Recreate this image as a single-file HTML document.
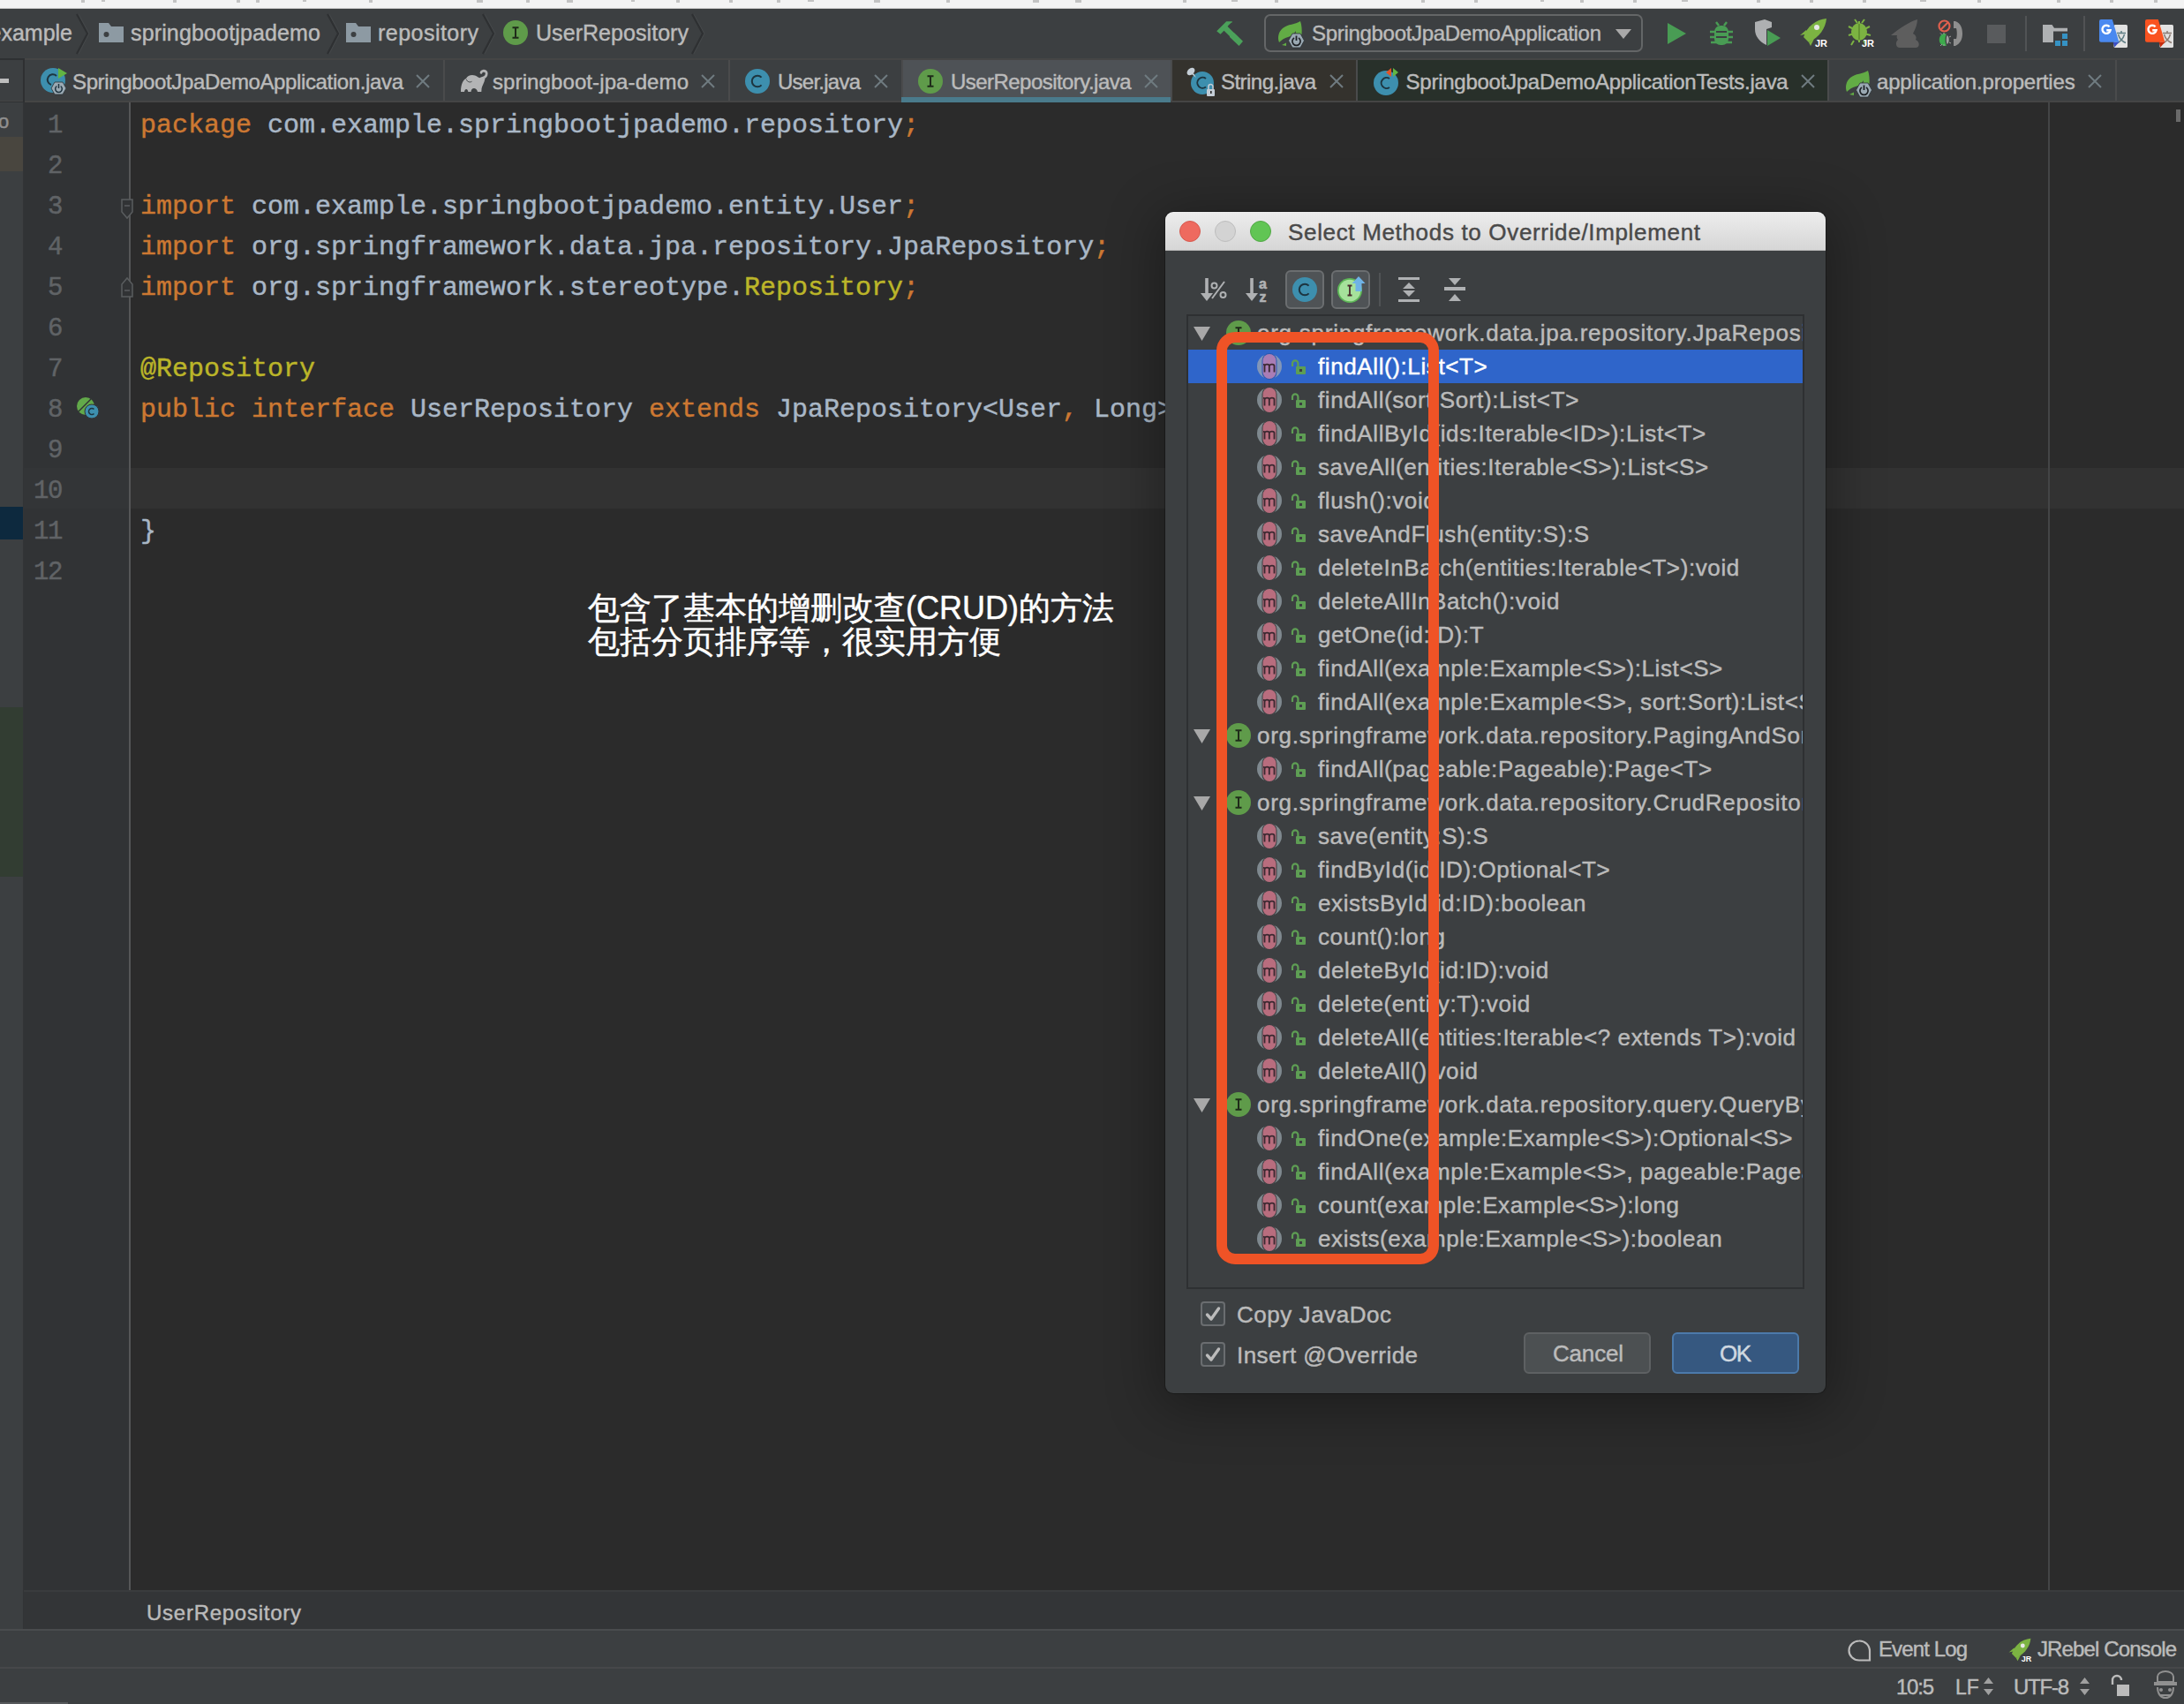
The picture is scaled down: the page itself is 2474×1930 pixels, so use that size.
<!DOCTYPE html><html><head><meta charset="utf-8"><style>
*{margin:0;padding:0;box-sizing:border-box}
html,body{width:2474px;height:1930px;overflow:hidden;background:#2B2B2B;font-family:"Liberation Sans",sans-serif}
.a{position:absolute}
.t{position:absolute;white-space:nowrap;line-height:1;-webkit-text-stroke:0.45px currentColor}
svg{position:absolute;overflow:visible}
</style></head><body>
<div class="a" style="left:0;top:0;width:2474px;height:10px;background:#F3F3F3"></div>
<div class="a" style="left:92px;top:0;width:4px;height:3px;background:#9A9A9A;opacity:0.55"></div>
<div class="a" style="left:115px;top:0;width:4px;height:2px;background:#9A9A9A;opacity:0.55"></div>
<div class="a" style="left:196px;top:0;width:4px;height:3px;background:#9A9A9A;opacity:0.55"></div>
<div class="a" style="left:268px;top:0;width:4px;height:3px;background:#9A9A9A;opacity:0.55"></div>
<div class="a" style="left:290px;top:0;width:4px;height:3px;background:#9A9A9A;opacity:0.55"></div>
<div class="a" style="left:343px;top:0;width:4px;height:2px;background:#9A9A9A;opacity:0.55"></div>
<div class="a" style="left:418px;top:0;width:4px;height:3px;background:#9A9A9A;opacity:0.55"></div>
<div class="a" style="left:540px;top:0;width:7px;height:3px;background:#9A9A9A;opacity:0.55"></div>
<div class="a" style="left:596px;top:0;width:4px;height:3px;background:#9A9A9A;opacity:0.55"></div>
<div class="a" style="left:642px;top:0;width:7px;height:3px;background:#9A9A9A;opacity:0.55"></div>
<div class="a" style="left:715px;top:0;width:4px;height:2px;background:#9A9A9A;opacity:0.55"></div>
<div class="a" style="left:766px;top:0;width:4px;height:3px;background:#9A9A9A;opacity:0.55"></div>
<div class="a" style="left:826px;top:0;width:4px;height:3px;background:#9A9A9A;opacity:0.55"></div>
<div class="a" style="left:880px;top:0;width:4px;height:3px;background:#9A9A9A;opacity:0.55"></div>
<div class="a" style="left:915px;top:0;width:7px;height:2px;background:#9A9A9A;opacity:0.55"></div>
<div class="a" style="left:990px;top:0;width:7px;height:3px;background:#9A9A9A;opacity:0.55"></div>
<div class="a" style="left:1072px;top:0;width:4px;height:3px;background:#9A9A9A;opacity:0.55"></div>
<div class="a" style="left:1170px;top:0;width:7px;height:3px;background:#9A9A9A;opacity:0.55"></div>
<div class="a" style="left:1218px;top:0;width:7px;height:3px;background:#9A9A9A;opacity:0.55"></div>
<div class="a" style="left:1340px;top:0;width:4px;height:3px;background:#9A9A9A;opacity:0.55"></div>
<div class="a" style="left:1395px;top:0;width:7px;height:2px;background:#9A9A9A;opacity:0.55"></div>
<div class="a" style="left:1444px;top:0;width:4px;height:3px;background:#9A9A9A;opacity:0.55"></div>
<div class="a" style="left:1610px;top:0;width:4px;height:3px;background:#9A9A9A;opacity:0.55"></div>
<div class="a" style="left:1670px;top:0;width:4px;height:3px;background:#9A9A9A;opacity:0.55"></div>
<div class="a" style="left:1745px;top:0;width:4px;height:2px;background:#9A9A9A;opacity:0.55"></div>
<div class="a" style="left:1790px;top:0;width:4px;height:3px;background:#9A9A9A;opacity:0.55"></div>
<div class="a" style="left:1850px;top:0;width:4px;height:3px;background:#9A9A9A;opacity:0.55"></div>
<div class="a" style="left:1905px;top:0;width:7px;height:2px;background:#9A9A9A;opacity:0.55"></div>
<div class="a" style="left:1990px;top:0;width:4px;height:3px;background:#9A9A9A;opacity:0.55"></div>
<div class="a" style="left:2050px;top:0;width:4px;height:3px;background:#9A9A9A;opacity:0.55"></div>
<div class="a" style="left:2110px;top:0;width:4px;height:3px;background:#9A9A9A;opacity:0.55"></div>
<div class="a" style="left:2175px;top:0;width:7px;height:2px;background:#9A9A9A;opacity:0.55"></div>
<div class="a" style="left:2240px;top:0;width:4px;height:3px;background:#9A9A9A;opacity:0.55"></div>
<div class="a" style="left:2330px;top:0;width:4px;height:3px;background:#9A9A9A;opacity:0.55"></div>
<div class="a" style="left:2390px;top:0;width:4px;height:3px;background:#9A9A9A;opacity:0.55"></div>
<div class="a" style="left:2440px;top:0;width:4px;height:3px;background:#9A9A9A;opacity:0.55"></div>
<div class="a" style="left:0;top:9px;width:2474px;height:1px;background:#C8C8C8"></div>
<div class="a" style="left:0;top:10px;width:2474px;height:57px;background:#3C3F41"></div>
<div class="a" style="left:0;top:66px;width:2474px;height:2px;background:#454545"></div>
<div class="t" style="left:-12.50px;top:24.84px;font-size:25px;color:#BBBBBB;letter-spacing:0.001px;">example</div>
<svg style="left:86px;top:16px" width="16" height="46" viewBox="0 0 16 46"><path d="M1 0 L13 22 L1 45" fill="none" stroke="#2E3032" stroke-width="2.2"/><path d="M3 0 L15 22 L3 45" fill="none" stroke="#45484A" stroke-width="1"/></svg>
<svg style="left:112px;top:26px" width="28" height="22" viewBox="0 0 28 22"><path d="M0 0 H11 L14 4 H28 V22 H0 Z" fill="#8D9AA3"/><circle cx="8.5" cy="13" r="3" fill="#3C3F41"/></svg>
<div class="t" style="left:148.00px;top:24.84px;font-size:25px;color:#BBBBBB;letter-spacing:0.147px;">springbootjpademo</div>
<svg style="left:370px;top:16px" width="16" height="46" viewBox="0 0 16 46"><path d="M1 0 L13 22 L1 45" fill="none" stroke="#2E3032" stroke-width="2.2"/><path d="M3 0 L15 22 L3 45" fill="none" stroke="#45484A" stroke-width="1"/></svg>
<svg style="left:392px;top:26px" width="28" height="22" viewBox="0 0 28 22"><path d="M0 0 H11 L14 4 H28 V22 H0 Z" fill="#8D9AA3"/><circle cx="8.5" cy="13" r="3" fill="#3C3F41"/></svg>
<div class="t" style="left:428.00px;top:24.84px;font-size:25px;color:#BBBBBB;letter-spacing:0.470px;">repository</div>
<svg style="left:546px;top:16px" width="16" height="46" viewBox="0 0 16 46"><path d="M1 0 L13 22 L1 45" fill="none" stroke="#2E3032" stroke-width="2.2"/><path d="M3 0 L15 22 L3 45" fill="none" stroke="#45484A" stroke-width="1"/></svg>
<svg style="left:570px;top:23px" width="28" height="28" viewBox="0 0 28 28"><circle cx="14" cy="14" r="14" fill="#5F9B4A"/><path d="M10.5 8.2 H17.5 M14 8.2 V19.8 M10.5 19.8 H17.5" stroke="#1F2B1A" stroke-width="2" fill="none"/></svg>
<div class="t" style="left:607.00px;top:24.84px;font-size:25px;color:#BBBBBB;letter-spacing:0.056px;">UserRepository</div>
<svg style="left:783px;top:16px" width="16" height="46" viewBox="0 0 16 46"><path d="M1 0 L13 22 L1 45" fill="none" stroke="#2E3032" stroke-width="2.2"/><path d="M3 0 L15 22 L3 45" fill="none" stroke="#45484A" stroke-width="1"/></svg>
<svg style="left:1370px;top:14px" width="40" height="40" viewBox="0 0 40 40"><path d="M8.2 21.2 L19.2 10.2 H25.8 V11.2 C24 12 22 14 20.6 16 L27.2 22.5 L28.5 23.5 L38 32.8 L33.5 38 L23 28 V27 L16.5 20.8 L12.5 24.8 Z" fill="#4BA15A"/></svg>
<div class="a" style="left:1432px;top:16px;width:429px;height:43px;border:2px solid #646667;border-radius:7px"></div>
<svg style="left:1446px;top:22px" width="32" height="32" viewBox="0 0 32 32"><path d="M27 2 C21 6 13 5 7 10 C2 14 1 21 3 26 C6 23 9 21 13 20 C17 19 20 16 22 13 C22 16 21 18 19 20 L28.5 17 C29 12 28.5 6 27 2 Z" fill="#62AC45"/><path d="M6 29 L11 26.5 V30 Z" fill="#62AC45"/><path d="M13.5 24 L18 16 H27 L31.5 24 L27 32 H18 Z" fill="#9AA9B3" stroke="#2B3236" stroke-width="0.8"/><path d="M20 21 A4.6 4.6 0 1 0 25 21" stroke="#1E2226" stroke-width="1.7" fill="none"/><path d="M22.5 18.5 V24" stroke="#1E2226" stroke-width="1.8"/></svg>
<div class="t" style="left:1486.00px;top:25.68px;font-size:24px;color:#BBBBBB;letter-spacing:-0.304px;">SpringbootJpaDemoApplication</div>
<svg style="left:1830px;top:33px" width="18" height="11" viewBox="0 0 18 11"><path d="M0 0 H18 L9 11 Z" fill="#A9A9A9"/></svg>
<svg style="left:1889px;top:26px" width="21" height="24" viewBox="0 0 21 24"><path d="M0 0 L21 12 L0 24 Z" fill="#499C54"/></svg>
<svg style="left:1937px;top:23px" width="26" height="30" viewBox="0 0 26 30"><path d="M7 2 L10 6 M19 2 L16 6" stroke="#499C54" stroke-width="2.4"/><rect x="5" y="6" width="16" height="22" rx="7" fill="#499C54"/><path d="M0 13 H26 M0 19 H26 M1 25 H25" stroke="#499C54" stroke-width="2.6"/><path d="M7 13 H19 M7 19 H19" stroke="#3C3F41" stroke-width="2.2"/></svg>
<svg style="left:1987px;top:21px" width="32" height="32" viewBox="0 0 32 32"><path d="M1 4 L12 1 L20 4 V10 L14 12 V30 C6 26 1 20 1 12 Z" fill="#AEB0B2"/><path d="M15 13 L30 22 L15 31 Z" fill="#499C54"/></svg>
<svg style="left:2037px;top:20px" width="34" height="34" viewBox="0 0 34 34"><path d="M6 22 C10 10 20 2 32 1 C31 12 24 22 12 28 Z" fill="#7CB342"/><path d="M2 20 L9 14 L12 18 Z M12 28 L18 24 L14 32 Z" fill="#7CB342"/><circle cx="21" cy="11" r="3" fill="#E8E8E8"/><text x="19" y="33" font-family="Liberation Sans" font-weight="bold" font-size="11" fill="#FFFFFF">JR</text></svg>
<svg style="left:2090px;top:20px" width="34" height="34" viewBox="0 0 34 34"><ellipse cx="16" cy="16" rx="9" ry="10" fill="#7CB342"/><path d="M16 4 V28 M4 10 L10 13 M4 20 L10 18 M28 10 L22 13 M29 20 L22 18 M10 26 L7 31 M21 26 L24 31 M11 2 L14 6 M22 2 L19 6" stroke="#7CB342" stroke-width="2"/><path d="M16 7 V25" stroke="#5C8A2E" stroke-width="1.5"/><text x="19" y="33" font-family="Liberation Sans" font-weight="bold" font-size="11" fill="#FFFFFF">JR</text></svg>
<svg style="left:2142px;top:22px" width="34" height="34" viewBox="0 0 34 34"><path d="M30 0 C22 2 10 10 0 18 L7 18 C6 20 7 22 8 23 C5 25 5 32 10 32 H28 C33 32 33 25 28 23 C30 20 27 17 25 16 C28 10 30 5 30 0 Z" fill="#5E5E5E"/></svg>
<svg style="left:2195px;top:22px" width="30" height="31" viewBox="0 0 30 31"><circle cx="7.5" cy="7.5" r="6" fill="none" stroke="#E0604E" stroke-width="2.2"/><path d="M3.5 11.5 L11.5 3.5" stroke="#E0604E" stroke-width="2.2"/><path d="M10 16.5 A6 7 0 1 0 10 29.5 C8 27 8 19 10 16.5 Z" fill="#3DAA4C"/><path d="M10.5 18 C13.5 19 13.5 27 10.5 28 C9.5 25 9.5 21 10.5 18 Z" fill="#A0A0A0"/><path d="M3 15.5 L5 17.5 M7 15 L7 17 M3 30 L5 28 M7 30 V28 M13 20 L15 19 M13 26 L15 27" stroke="#A0A0A0" stroke-width="1"/><path d="M18 2 H20 C26 4 28 10 28 16 C28 22 26 27 20 30 H18 V22 H21 C22 19 22 13 21 10 H18 Z" fill="#8E8E8E"/></svg>
<div class="a" style="left:2251px;top:28px;width:21px;height:21px;background:#595B5D"></div>
<div class="a" style="left:2294px;top:18px;width:2px;height:40px;background:#515355"></div>
<svg style="left:2314px;top:28px" width="30" height="26" viewBox="0 0 30 26"><path d="M0 0 H10.5 L13 3.8 H28 V7.6 H12 V20 H0 Z" fill="#AFB1B3"/><rect x="22" y="10" width="6" height="6" fill="#3592C4"/><rect x="14" y="18" width="6" height="6" fill="#3592C4"/><rect x="22" y="18" width="6" height="6" fill="#3592C4"/></svg>
<div class="a" style="left:2360px;top:18px;width:2px;height:40px;background:#515355"></div>
<svg style="left:2377px;top:21px" width="34" height="34" viewBox="0 0 34 34"><rect x="17.5" y="7" width="15.5" height="26" rx="1.5" fill="#E2E2E2"/><path d="M21 16.5 H31 M26 14 V16.5 M22.5 18 C24 23 27 26 31 27.5 M29.5 18 C28 23 25 26 21 28" stroke="#5E7D84" stroke-width="1.5" fill="none"/><path d="M3 1 H15.8 L23.4 26.7 H3 A2 2 0 0 1 1 24.7 V3 A2 2 0 0 1 3 1 Z" fill="#4A89F0"/><path d="M16.6 26.7 H23.4 L18.3 32.6 Z" fill="#3A4FC4"/><path d="M12.6 9.3 A4.6 4.6 0 1 0 13.6 13.2 H9.2" stroke="#FFFFFF" stroke-width="2.4" fill="none"/></svg>
<svg style="left:2429px;top:21px" width="34" height="34" viewBox="0 0 34 34"><rect x="17.5" y="7" width="15.5" height="26" rx="1.5" fill="#E2E2E2"/><path d="M21 16.5 H31 M26 14 V16.5 M22.5 18 C24 23 27 26 31 27.5 M29.5 18 C28 23 25 26 21 28" stroke="#8A7A72" stroke-width="1.5" fill="none"/><path d="M3 1 H15.8 L23.4 26.7 H3 A2 2 0 0 1 1 24.7 V3 A2 2 0 0 1 3 1 Z" fill="#FA5320"/><path d="M16.6 26.7 H23.4 L18.3 32.6 Z" fill="#C42A0C"/><path d="M12.6 9.3 A4.6 4.6 0 1 0 13.6 13.2 H9.2" stroke="#FFFFFF" stroke-width="2.4" fill="none"/></svg>
<div class="a" style="left:0;top:68px;width:2474px;height:48px;background:#3C3F41"></div>
<div class="a" style="left:0;top:114px;width:2474px;height:2px;background:#454545"></div>
<div class="a" style="left:0;top:89px;width:10px;height:5px;background:#BDBDBD"></div>
<div class="a" style="left:0;top:66px;width:28px;height:2px;background:#2E3032"></div>
<div class="a" style="left:0;top:115px;width:28px;height:3px;background:#2E3032"></div>
<div class="a" style="left:26px;top:66px;width:2px;height:52px;background:#2E3032"></div>
<div class="a" style="left:1021px;top:68px;width:305px;height:46px;background:#4E5256"></div>
<div class="a" style="left:1326px;top:68px;width:210px;height:46px;background:#34322D"></div>
<div class="a" style="left:1536px;top:68px;width:534px;height:46px;background:#28302A"></div>
<div class="a" style="left:502px;top:68px;width:2px;height:46px;background:#4A4B4C"></div>
<div class="t" style="left:82.00px;top:80.68px;font-size:24px;color:#BBBBBB;letter-spacing:-0.372px;">SpringbootJpaDemoApplication.java</div>
<svg style="left:471px;top:84px" width="16" height="16" viewBox="0 0 16 16"><path d="M1 1 L15 15 M15 1 L1 15" stroke="#6F7B80" stroke-width="2"/></svg>
<div class="a" style="left:825px;top:68px;width:2px;height:46px;background:#4A4B4C"></div>
<div class="t" style="left:558.00px;top:80.68px;font-size:24px;color:#BBBBBB;letter-spacing:0.104px;">springboot-jpa-demo</div>
<svg style="left:794px;top:84px" width="16" height="16" viewBox="0 0 16 16"><path d="M1 1 L15 15 M15 1 L1 15" stroke="#6F7B80" stroke-width="2"/></svg>
<div class="a" style="left:1021px;top:68px;width:2px;height:46px;background:#4A4B4C"></div>
<div class="t" style="left:881.00px;top:80.68px;font-size:24px;color:#BBBBBB;letter-spacing:-0.755px;">User.java</div>
<svg style="left:990px;top:84px" width="16" height="16" viewBox="0 0 16 16"><path d="M1 1 L15 15 M15 1 L1 15" stroke="#6F7B80" stroke-width="2"/></svg>
<div class="a" style="left:1326px;top:68px;width:2px;height:46px;background:#4A4B4C"></div>
<div class="t" style="left:1077.00px;top:80.68px;font-size:24px;color:#BBBBBB;letter-spacing:-0.544px;">UserRepository.java</div>
<svg style="left:1296px;top:84px" width="16" height="16" viewBox="0 0 16 16"><path d="M1 1 L15 15 M15 1 L1 15" stroke="#6F7B80" stroke-width="2"/></svg>
<div class="a" style="left:1536px;top:68px;width:2px;height:46px;background:#4A4B4C"></div>
<div class="t" style="left:1383.00px;top:80.68px;font-size:24px;color:#BBBBBB;letter-spacing:-0.539px;">String.java</div>
<svg style="left:1506px;top:84px" width="16" height="16" viewBox="0 0 16 16"><path d="M1 1 L15 15 M15 1 L1 15" stroke="#6F7B80" stroke-width="2"/></svg>
<div class="a" style="left:2070px;top:68px;width:2px;height:46px;background:#4A4B4C"></div>
<div class="t" style="left:1592.60px;top:80.68px;font-size:24px;color:#BBBBBB;letter-spacing:-0.265px;">SpringbootJpaDemoApplicationTests.java</div>
<svg style="left:2040px;top:84px" width="16" height="16" viewBox="0 0 16 16"><path d="M1 1 L15 15 M15 1 L1 15" stroke="#6F7B80" stroke-width="2"/></svg>
<div class="a" style="left:2396px;top:68px;width:2px;height:46px;background:#4A4B4C"></div>
<div class="t" style="left:2126.00px;top:80.68px;font-size:24px;color:#BBBBBB;letter-spacing:-0.164px;">application.properties</div>
<svg style="left:2365px;top:84px" width="16" height="16" viewBox="0 0 16 16"><path d="M1 1 L15 15 M15 1 L1 15" stroke="#6F7B80" stroke-width="2"/></svg>
<div class="a" style="left:1021px;top:110px;width:305px;height:6px;background:#4A7B8C"></div>
<svg style="left:46px;top:75px" width="34" height="34" viewBox="0 0 34 34"><circle cx="14" cy="16" r="14" fill="#3D8FAE"/><path d="M18 11 A6 6 0 1 0 12 21" stroke="#1D3540" stroke-width="2" fill="none"/><path d="M20 2 L30 8 L20 14 Z" fill="#62B543"/><path d="M12 25 L16 18 H25 L29 25 L25 32 H16 Z" fill="#9AA9B3" stroke="#2B3236" stroke-width="0.8"/><path d="M18.3 22.5 A3.8 3.8 0 1 0 22.7 22.5" stroke="#1F3440" stroke-width="1.5" fill="none"/><path d="M20.5 20 V25" stroke="#1F3440" stroke-width="1.5"/></svg>
<svg style="left:520px;top:78px" width="34" height="28" viewBox="10 12 34 28"><path d="M12 38 C12 29 15 24 18 23 C19 20.5 22 19 25 19 C29.5 19 32 22.5 35 22.5 L39.5 23 C38.5 28 36.2 31 35.6 34 L35.3 38 H31 C30.5 35.5 28.5 34 27 34 C25 34 23.8 35.5 23.5 38 H20.3 C20 36 19.2 35 18.2 35 C17.2 35 16.3 36 16 38 Z" fill="#B3B4B5"/><path d="M35 22.8 C39.5 22 41.2 19.5 41.2 17.2 C41.2 14.8 39 14 37.2 14.3 C36 14.5 35.2 15.2 35 16.3" stroke="#B3B4B5" stroke-width="2.8" fill="none" stroke-linecap="round"/><path d="M18.3 23.8 C19.3 27 22.5 27.6 24.5 26.3" stroke="#3C3F41" stroke-width="0.9" fill="none"/></svg>
<svg style="left:843.5px;top:78px" width="28" height="28" viewBox="0 0 28 28"><circle cx="14" cy="14" r="14" fill="#3D8FAE"/><path d="M18.6 9.6 A6.3 6.3 0 1 0 18.6 18.4" stroke="#1D3540" stroke-width="2" fill="none"/></svg>
<svg style="left:1040px;top:78px" width="28" height="28" viewBox="0 0 28 28"><circle cx="14" cy="14" r="14" fill="#5F9B4A"/><path d="M10.5 8.2 H17.5 M14 8.2 V19.8 M10.5 19.8 H17.5" stroke="#1F2B1A" stroke-width="2" fill="none"/></svg>
<svg style="left:1343px;top:75px" width="34" height="34" viewBox="0 0 34 34"><circle cx="19" cy="19" r="13" fill="#3D8FAE"/><path d="M23 14 A6 6 0 1 0 23 23.5" stroke="#1D3540" stroke-width="2" fill="none"/><ellipse cx="6" cy="6" rx="5" ry="3.5" transform="rotate(-40 6 6)" fill="#C5CED6"/><path d="M7 9 L12 13 L9 8 Z" fill="#C5CED6"/><rect x="24" y="26" width="9" height="8" rx="1" fill="#C5CED6"/><path d="M26 26 V23 A2.5 2.5 0 0 1 31 23 V26" stroke="#C5CED6" stroke-width="1.6" fill="none"/><rect x="28" y="28" width="1.6" height="3" fill="#2B2B2B"/></svg>
<svg style="left:1556px;top:75px" width="32" height="34" viewBox="0 0 32 34"><circle cx="14" cy="19" r="14" fill="#3D8FAE"/><path d="M18 14 A6 6 0 1 0 18 24" stroke="#1D3540" stroke-width="2" fill="none"/><path d="M20 2 L20 12 L14 7 Z" fill="#E0542A"/><path d="M22 2 L28 7 L22 12 Z" fill="#62B543"/></svg>
<svg style="left:2089px;top:78px" width="32" height="32" viewBox="0 0 32 32"><path d="M27 2 C21 6 13 5 7 10 C2 14 1 21 3 26 C6 23 9 21 13 20 C17 19 20 16 22 13 C22 16 21 18 19 20 L28.5 17 C29 12 28.5 6 27 2 Z" fill="#62AC45"/><path d="M6 29 L11 26.5 V30 Z" fill="#62AC45"/><path d="M13.5 24 L18 16 H27 L31.5 24 L27 32 H18 Z" fill="#9AA9B3" stroke="#2B3236" stroke-width="0.8"/><path d="M20 21 A4.6 4.6 0 1 0 25 21" stroke="#1E2226" stroke-width="1.7" fill="none"/><path d="M22.5 18.5 V24" stroke="#1E2226" stroke-width="1.8"/></svg>
<div class="a" style="left:0;top:116px;width:26px;height:1730px;background:#3C3F41"></div>
<div class="a" style="left:26px;top:116px;width:1px;height:1730px;background:#323436"></div>
<div class="a" style="left:0;top:155px;width:26px;height:39px;background:#49463F"></div>
<div class="a" style="left:0;top:574px;width:26px;height:37px;background:#0D293E"></div>
<div class="a" style="left:0;top:801px;width:26px;height:192px;background:#323D32"></div>
<div class="t" style="left:-2.00px;top:127.38px;font-size:22px;color:#909090;">o</div>
<div class="a" style="left:27px;top:116px;width:120px;height:1686px;background:#313335"></div>
<div class="a" style="left:146px;top:116px;width:2px;height:1686px;background:#555657"></div>
<div class="a" style="left:148px;top:530px;width:2326px;height:46px;background:#323232"></div>
<div class="a" style="left:2320px;top:116px;width:2px;height:1686px;background:#444546"></div>
<div class="a" style="left:2465px;top:124px;width:5px;height:14px;background:#6A6A6A"></div>
<div class="a" style="left:27px;top:530px;width:119px;height:46px;background:#333537"></div>
<div class="t" style="left:54.00px;top:127.77px;font-size:29px;color:#606366;font-family:'Liberation Mono';letter-spacing:-1.4px;">1</div>
<div class="t" style="left:54.00px;top:173.77px;font-size:29px;color:#606366;font-family:'Liberation Mono';letter-spacing:-1.4px;">2</div>
<div class="t" style="left:54.00px;top:219.77px;font-size:29px;color:#606366;font-family:'Liberation Mono';letter-spacing:-1.4px;">3</div>
<div class="t" style="left:54.00px;top:265.77px;font-size:29px;color:#606366;font-family:'Liberation Mono';letter-spacing:-1.4px;">4</div>
<div class="t" style="left:54.00px;top:311.77px;font-size:29px;color:#606366;font-family:'Liberation Mono';letter-spacing:-1.4px;">5</div>
<div class="t" style="left:54.00px;top:357.77px;font-size:29px;color:#606366;font-family:'Liberation Mono';letter-spacing:-1.4px;">6</div>
<div class="t" style="left:54.00px;top:403.77px;font-size:29px;color:#606366;font-family:'Liberation Mono';letter-spacing:-1.4px;">7</div>
<div class="t" style="left:54.00px;top:449.77px;font-size:29px;color:#606366;font-family:'Liberation Mono';letter-spacing:-1.4px;">8</div>
<div class="t" style="left:54.00px;top:495.77px;font-size:29px;color:#606366;font-family:'Liberation Mono';letter-spacing:-1.4px;">9</div>
<div class="t" style="left:38.00px;top:541.77px;font-size:29px;color:#606366;font-family:'Liberation Mono';letter-spacing:-1.4px;">10</div>
<div class="t" style="left:38.00px;top:587.77px;font-size:29px;color:#606366;font-family:'Liberation Mono';letter-spacing:-1.4px;">11</div>
<div class="t" style="left:38.00px;top:633.77px;font-size:29px;color:#606366;font-family:'Liberation Mono';letter-spacing:-1.4px;">12</div>
<div class="t" style="left:159.00px;top:127.00px;font-size:30px;color:#CC7832;font-family:'Liberation Mono';">package </div>
<div class="t" style="left:303.00px;top:127.00px;font-size:30px;color:#A9B7C6;font-family:'Liberation Mono';">com.example.springbootjpademo.repository</div>
<div class="t" style="left:1023.00px;top:127.00px;font-size:30px;color:#CC7832;font-family:'Liberation Mono';">;</div>
<div class="t" style="left:159.00px;top:219.00px;font-size:30px;color:#CC7832;font-family:'Liberation Mono';">import </div>
<div class="t" style="left:285.00px;top:219.00px;font-size:30px;color:#A9B7C6;font-family:'Liberation Mono';">com.example.springbootjpademo.entity.User</div>
<div class="t" style="left:1023.00px;top:219.00px;font-size:30px;color:#CC7832;font-family:'Liberation Mono';">;</div>
<div class="t" style="left:159.00px;top:265.00px;font-size:30px;color:#CC7832;font-family:'Liberation Mono';">import </div>
<div class="t" style="left:285.00px;top:265.00px;font-size:30px;color:#A9B7C6;font-family:'Liberation Mono';">org.springframework.data.jpa.repository.JpaRepository</div>
<div class="t" style="left:1239.00px;top:265.00px;font-size:30px;color:#CC7832;font-family:'Liberation Mono';">;</div>
<div class="t" style="left:159.00px;top:311.00px;font-size:30px;color:#CC7832;font-family:'Liberation Mono';">import </div>
<div class="t" style="left:285.00px;top:311.00px;font-size:30px;color:#A9B7C6;font-family:'Liberation Mono';">org.springframework.stereotype.</div>
<div class="t" style="left:843.00px;top:311.00px;font-size:30px;color:#BBB529;font-family:'Liberation Mono';">Repository</div>
<div class="t" style="left:1023.00px;top:311.00px;font-size:30px;color:#CC7832;font-family:'Liberation Mono';">;</div>
<div class="t" style="left:159.00px;top:403.00px;font-size:30px;color:#BBB529;font-family:'Liberation Mono';">@Repository</div>
<div class="t" style="left:159.00px;top:449.00px;font-size:30px;color:#CC7832;font-family:'Liberation Mono';">public </div>
<div class="t" style="left:285.00px;top:449.00px;font-size:30px;color:#CC7832;font-family:'Liberation Mono';">interface </div>
<div class="t" style="left:465.00px;top:449.00px;font-size:30px;color:#A9B7C6;font-family:'Liberation Mono';">UserRepository </div>
<div class="t" style="left:735.00px;top:449.00px;font-size:30px;color:#CC7832;font-family:'Liberation Mono';">extends </div>
<div class="t" style="left:879.00px;top:449.00px;font-size:30px;color:#A9B7C6;font-family:'Liberation Mono';">JpaRepository&lt;User</div>
<div class="t" style="left:1203.00px;top:449.00px;font-size:30px;color:#CC7832;font-family:'Liberation Mono';">, </div>
<div class="t" style="left:1239.00px;top:449.00px;font-size:30px;color:#A9B7C6;font-family:'Liberation Mono';">Long&gt;</div>
<div class="t" style="left:159.00px;top:587.00px;font-size:30px;color:#A9B7C6;font-family:'Liberation Mono';">}</div>
<svg style="left:137px;top:225px" width="14" height="24" viewBox="0 0 14 24"><path d="M1 1 H13 V15 L7 22 L1 15 Z" fill="#313335" stroke="#5A5D5F" stroke-width="1.5"/><path d="M4 8 H10" stroke="#5A5D5F" stroke-width="1.5"/></svg>
<svg style="left:137px;top:313px" width="14" height="24" viewBox="0 0 14 24"><path d="M1 23 H13 V9 L7 2 L1 9 Z" fill="#313335" stroke="#5A5D5F" stroke-width="1.5"/><path d="M4 16 H10" stroke="#5A5D5F" stroke-width="1.5"/></svg>
<svg style="left:86px;top:449px" width="28" height="26" viewBox="0 0 28 26"><circle cx="11" cy="11" r="10" fill="#62A94A"/><path d="M3 17 L17 3" stroke="#313335" stroke-width="1.5"/><circle cx="18" cy="17" r="8" fill="#3D8FAE" stroke="#313335" stroke-width="1"/><path d="M20.5 14.5 A3.5 3.5 0 1 0 20.5 19.5" stroke="#1D3540" stroke-width="1.6" fill="none"/></svg>
<div class="t" style="left:666px;top:670px;font-size:36px;line-height:38px;color:#FFFFFF">包含了基本的增删改查(CRUD)的方法<br>包括分页排序等，很实用方便</div>
<div class="a" style="left:1320px;top:240px;width:748px;height:1338px;border-radius:9px;background:#3C3F41;box-shadow:0 10px 60px 8px rgba(0,0,0,0.32), 0 0 0 1px rgba(0,0,0,0.25)"></div>
<div class="a" style="left:1320px;top:240px;width:748px;height:44px;border-radius:9px 9px 0 0;background:linear-gradient(#EDEDED,#D6D6D6);border-bottom:1px solid #B8B8B8"></div>
<div class="a" style="left:1336px;top:250px;width:24px;height:24px;border-radius:50%;background:#EE6A5F;border:1px solid #D65A4F"></div>
<div class="a" style="left:1376px;top:250px;width:24px;height:24px;border-radius:50%;background:#D3D3D3;border:1px solid #BDBDBD"></div>
<div class="a" style="left:1416px;top:250px;width:24px;height:24px;border-radius:50%;background:#61C554;border:1px solid #52A846"></div>
<div class="t" style="left:1459.00px;top:249.99px;font-size:26px;color:#4A4A4A;letter-spacing:0.667px;">Select Methods to Override/Implement</div>
<svg style="left:1360px;top:315px" width="32" height="27" viewBox="0 0 32 27"><path d="M7 0 V20" stroke="#AFB1B3" stroke-width="3.6"/><path d="M0 17 H14 L7 26 Z" fill="#AFB1B3"/><circle cx="15.5" cy="8.5" r="3" fill="none" stroke="#AFB1B3" stroke-width="2"/><circle cx="25.5" cy="19" r="3" fill="none" stroke="#AFB1B3" stroke-width="2"/><path d="M13 23 L27 4" stroke="#AFB1B3" stroke-width="2"/></svg>
<svg style="left:1411px;top:315px" width="30" height="27" viewBox="0 0 30 27"><path d="M7 0 V20" stroke="#AFB1B3" stroke-width="3.6"/><path d="M0 17 H14 L7 26 Z" fill="#AFB1B3"/><text x="15" y="12" font-family="Liberation Sans" font-weight="bold" font-size="16" fill="#AFB1B3" stroke="#AFB1B3" stroke-width="0.6">a</text><text x="15.5" y="26.5" font-family="Liberation Sans" font-weight="bold" font-size="16" fill="#AFB1B3" stroke="#AFB1B3" stroke-width="0.6">z</text></svg>
<div class="a" style="left:1456px;top:306px;width:44px;height:44px;border-radius:6px;background:#4F5356;border:2px solid #6B6E70"></div>
<svg style="left:1464px;top:314px" width="28" height="28" viewBox="0 0 28 28"><circle cx="14" cy="14" r="14" fill="#3D8FAE"/><path d="M18.6 9.6 A6.3 6.3 0 1 0 18.6 18.4" stroke="#1D3540" stroke-width="2" fill="none"/></svg>
<div class="a" style="left:1508px;top:306px;width:44px;height:44px;border-radius:6px;background:#4F5356;border:2px solid #6B6E70"></div>
<svg style="left:1515px;top:312px" width="34" height="32" viewBox="0 0 34 32"><circle cx="14" cy="17" r="14" fill="#5DB657"/><circle cx="14" cy="17" r="12.3" fill="#A6E29B"/><path d="M11.5 11.5 H16.5 M14 11.5 V22.5 M11.5 22.5 H16.5" stroke="#4A2E2E" stroke-width="1.8" fill="none"/><path d="M24 1 L31.5 9 H27.5 V18 H20.5 V9 H16.5 Z" fill="#6FB3E6"/></svg>
<div class="a" style="left:1562px;top:309px;width:2px;height:38px;background:#505355"></div>
<svg style="left:1584px;top:314px" width="26" height="28" viewBox="0 0 26 28"><path d="M0 1.5 H24 M0 26.5 H24" stroke="#AFB1B3" stroke-width="3"/><path d="M12 6 L19 13 H5 Z M12 22 L19 15 H5 Z" fill="#AFB1B3"/></svg>
<svg style="left:1636px;top:314px" width="26" height="28" viewBox="0 0 26 28"><path d="M0 13 H24" stroke="#AFB1B3" stroke-width="4"/><path d="M5 1 H19 L12 9 Z M5 27 H19 L12 19 Z" fill="#AFB1B3"/></svg>
<div class="a" style="left:1344px;top:356px;width:700px;height:1104px;border:2px solid #2E3032;background:#3C3F41;overflow:hidden">
<svg style="left:6px;top:12px" width="19" height="16" viewBox="0 0 19 16"><path d="M0 0 H19 L9.5 16 Z" fill="#A8A8A8"/></svg>
<svg style="left:43px;top:5px" width="28" height="28" viewBox="0 0 28 28"><circle cx="14" cy="14" r="14" fill="#5F9B4A"/><path d="M10.5 8.2 H17.5 M14 8.2 V19.8 M10.5 19.8 H17.5" stroke="#1F2B1A" stroke-width="2" fill="none"/></svg>
<div class="t" style="left:78.00px;top:5.99px;font-size:26px;color:#BBBBBB;letter-spacing:0.75px;">org.springframework.data.jpa.repository.JpaRepository</div>
<div class="a" style="left:0;top:38px;width:696px;height:38px;background:#2F65CA"></div>
<svg style="left:78px;top:43px" width="28" height="28" viewBox="0 0 28 28"><circle cx="14" cy="14" r="14" fill="#8296B8"/><rect x="5.5" y="-1" width="17" height="30" rx="8.5" fill="#2A58B0"/><rect x="6.5" y="0" width="15" height="28" rx="7.5" fill="#A97DB5"/><path d="M8.5 20.5 V11.5 M7 11.8 H8.5 M8.5 13.5 C9 11 13.8 11 13.8 13.5 V20.5 M13.8 13.5 C14.5 11 19.5 11 19.5 13.5 V20.5" stroke="#3A2830" stroke-width="1.8" fill="none"/></svg>
<svg style="left:116px;top:49px" width="17" height="17" viewBox="0 0 17 17"><path d="M2 8 V4.5 A3.2 3.2 0 0 1 8.4 4.5 V8" stroke="#5E9E54" stroke-width="2.2" fill="none"/><rect x="6" y="8" width="11" height="9" rx="1" fill="#5E9E54"/><rect x="10" y="11" width="3" height="3" fill="#3C3F41"/></svg>
<div class="t" style="left:147.00px;top:43.99px;font-size:26px;color:#FFFFFF;letter-spacing:0.6px;">findAll():List&lt;T&gt;</div>
<svg style="left:78px;top:81px" width="28" height="28" viewBox="0 0 28 28"><circle cx="14" cy="14" r="14" fill="#7F898F"/><rect x="5.5" y="-1" width="17" height="30" rx="8.5" fill="#3C3F41"/><rect x="6.5" y="0" width="15" height="28" rx="7.5" fill="#B86D7E"/><path d="M8.5 20.5 V11.5 M7 11.8 H8.5 M8.5 13.5 C9 11 13.8 11 13.8 13.5 V20.5 M13.8 13.5 C14.5 11 19.5 11 19.5 13.5 V20.5" stroke="#3A2830" stroke-width="1.8" fill="none"/></svg>
<svg style="left:116px;top:87px" width="17" height="17" viewBox="0 0 17 17"><path d="M2 8 V4.5 A3.2 3.2 0 0 1 8.4 4.5 V8" stroke="#5E9E54" stroke-width="2.2" fill="none"/><rect x="6" y="8" width="11" height="9" rx="1" fill="#5E9E54"/><rect x="10" y="11" width="3" height="3" fill="#3C3F41"/></svg>
<div class="t" style="left:147.00px;top:81.99px;font-size:26px;color:#BBBBBB;letter-spacing:0.6px;">findAll(sort:Sort):List&lt;T&gt;</div>
<svg style="left:78px;top:119px" width="28" height="28" viewBox="0 0 28 28"><circle cx="14" cy="14" r="14" fill="#7F898F"/><rect x="5.5" y="-1" width="17" height="30" rx="8.5" fill="#3C3F41"/><rect x="6.5" y="0" width="15" height="28" rx="7.5" fill="#B86D7E"/><path d="M8.5 20.5 V11.5 M7 11.8 H8.5 M8.5 13.5 C9 11 13.8 11 13.8 13.5 V20.5 M13.8 13.5 C14.5 11 19.5 11 19.5 13.5 V20.5" stroke="#3A2830" stroke-width="1.8" fill="none"/></svg>
<svg style="left:116px;top:125px" width="17" height="17" viewBox="0 0 17 17"><path d="M2 8 V4.5 A3.2 3.2 0 0 1 8.4 4.5 V8" stroke="#5E9E54" stroke-width="2.2" fill="none"/><rect x="6" y="8" width="11" height="9" rx="1" fill="#5E9E54"/><rect x="10" y="11" width="3" height="3" fill="#3C3F41"/></svg>
<div class="t" style="left:147.00px;top:119.99px;font-size:26px;color:#BBBBBB;letter-spacing:0.6px;">findAllById(ids:Iterable&lt;ID&gt;):List&lt;T&gt;</div>
<svg style="left:78px;top:157px" width="28" height="28" viewBox="0 0 28 28"><circle cx="14" cy="14" r="14" fill="#7F898F"/><rect x="5.5" y="-1" width="17" height="30" rx="8.5" fill="#3C3F41"/><rect x="6.5" y="0" width="15" height="28" rx="7.5" fill="#B86D7E"/><path d="M8.5 20.5 V11.5 M7 11.8 H8.5 M8.5 13.5 C9 11 13.8 11 13.8 13.5 V20.5 M13.8 13.5 C14.5 11 19.5 11 19.5 13.5 V20.5" stroke="#3A2830" stroke-width="1.8" fill="none"/></svg>
<svg style="left:116px;top:163px" width="17" height="17" viewBox="0 0 17 17"><path d="M2 8 V4.5 A3.2 3.2 0 0 1 8.4 4.5 V8" stroke="#5E9E54" stroke-width="2.2" fill="none"/><rect x="6" y="8" width="11" height="9" rx="1" fill="#5E9E54"/><rect x="10" y="11" width="3" height="3" fill="#3C3F41"/></svg>
<div class="t" style="left:147.00px;top:157.99px;font-size:26px;color:#BBBBBB;letter-spacing:0.6px;">saveAll(entities:Iterable&lt;S&gt;):List&lt;S&gt;</div>
<svg style="left:78px;top:195px" width="28" height="28" viewBox="0 0 28 28"><circle cx="14" cy="14" r="14" fill="#7F898F"/><rect x="5.5" y="-1" width="17" height="30" rx="8.5" fill="#3C3F41"/><rect x="6.5" y="0" width="15" height="28" rx="7.5" fill="#B86D7E"/><path d="M8.5 20.5 V11.5 M7 11.8 H8.5 M8.5 13.5 C9 11 13.8 11 13.8 13.5 V20.5 M13.8 13.5 C14.5 11 19.5 11 19.5 13.5 V20.5" stroke="#3A2830" stroke-width="1.8" fill="none"/></svg>
<svg style="left:116px;top:201px" width="17" height="17" viewBox="0 0 17 17"><path d="M2 8 V4.5 A3.2 3.2 0 0 1 8.4 4.5 V8" stroke="#5E9E54" stroke-width="2.2" fill="none"/><rect x="6" y="8" width="11" height="9" rx="1" fill="#5E9E54"/><rect x="10" y="11" width="3" height="3" fill="#3C3F41"/></svg>
<div class="t" style="left:147.00px;top:195.99px;font-size:26px;color:#BBBBBB;letter-spacing:0.6px;">flush():void</div>
<svg style="left:78px;top:233px" width="28" height="28" viewBox="0 0 28 28"><circle cx="14" cy="14" r="14" fill="#7F898F"/><rect x="5.5" y="-1" width="17" height="30" rx="8.5" fill="#3C3F41"/><rect x="6.5" y="0" width="15" height="28" rx="7.5" fill="#B86D7E"/><path d="M8.5 20.5 V11.5 M7 11.8 H8.5 M8.5 13.5 C9 11 13.8 11 13.8 13.5 V20.5 M13.8 13.5 C14.5 11 19.5 11 19.5 13.5 V20.5" stroke="#3A2830" stroke-width="1.8" fill="none"/></svg>
<svg style="left:116px;top:239px" width="17" height="17" viewBox="0 0 17 17"><path d="M2 8 V4.5 A3.2 3.2 0 0 1 8.4 4.5 V8" stroke="#5E9E54" stroke-width="2.2" fill="none"/><rect x="6" y="8" width="11" height="9" rx="1" fill="#5E9E54"/><rect x="10" y="11" width="3" height="3" fill="#3C3F41"/></svg>
<div class="t" style="left:147.00px;top:233.99px;font-size:26px;color:#BBBBBB;letter-spacing:0.6px;">saveAndFlush(entity:S):S</div>
<svg style="left:78px;top:271px" width="28" height="28" viewBox="0 0 28 28"><circle cx="14" cy="14" r="14" fill="#7F898F"/><rect x="5.5" y="-1" width="17" height="30" rx="8.5" fill="#3C3F41"/><rect x="6.5" y="0" width="15" height="28" rx="7.5" fill="#B86D7E"/><path d="M8.5 20.5 V11.5 M7 11.8 H8.5 M8.5 13.5 C9 11 13.8 11 13.8 13.5 V20.5 M13.8 13.5 C14.5 11 19.5 11 19.5 13.5 V20.5" stroke="#3A2830" stroke-width="1.8" fill="none"/></svg>
<svg style="left:116px;top:277px" width="17" height="17" viewBox="0 0 17 17"><path d="M2 8 V4.5 A3.2 3.2 0 0 1 8.4 4.5 V8" stroke="#5E9E54" stroke-width="2.2" fill="none"/><rect x="6" y="8" width="11" height="9" rx="1" fill="#5E9E54"/><rect x="10" y="11" width="3" height="3" fill="#3C3F41"/></svg>
<div class="t" style="left:147.00px;top:271.99px;font-size:26px;color:#BBBBBB;letter-spacing:0.6px;">deleteInBatch(entities:Iterable&lt;T&gt;):void</div>
<svg style="left:78px;top:309px" width="28" height="28" viewBox="0 0 28 28"><circle cx="14" cy="14" r="14" fill="#7F898F"/><rect x="5.5" y="-1" width="17" height="30" rx="8.5" fill="#3C3F41"/><rect x="6.5" y="0" width="15" height="28" rx="7.5" fill="#B86D7E"/><path d="M8.5 20.5 V11.5 M7 11.8 H8.5 M8.5 13.5 C9 11 13.8 11 13.8 13.5 V20.5 M13.8 13.5 C14.5 11 19.5 11 19.5 13.5 V20.5" stroke="#3A2830" stroke-width="1.8" fill="none"/></svg>
<svg style="left:116px;top:315px" width="17" height="17" viewBox="0 0 17 17"><path d="M2 8 V4.5 A3.2 3.2 0 0 1 8.4 4.5 V8" stroke="#5E9E54" stroke-width="2.2" fill="none"/><rect x="6" y="8" width="11" height="9" rx="1" fill="#5E9E54"/><rect x="10" y="11" width="3" height="3" fill="#3C3F41"/></svg>
<div class="t" style="left:147.00px;top:309.99px;font-size:26px;color:#BBBBBB;letter-spacing:0.6px;">deleteAllInBatch():void</div>
<svg style="left:78px;top:347px" width="28" height="28" viewBox="0 0 28 28"><circle cx="14" cy="14" r="14" fill="#7F898F"/><rect x="5.5" y="-1" width="17" height="30" rx="8.5" fill="#3C3F41"/><rect x="6.5" y="0" width="15" height="28" rx="7.5" fill="#B86D7E"/><path d="M8.5 20.5 V11.5 M7 11.8 H8.5 M8.5 13.5 C9 11 13.8 11 13.8 13.5 V20.5 M13.8 13.5 C14.5 11 19.5 11 19.5 13.5 V20.5" stroke="#3A2830" stroke-width="1.8" fill="none"/></svg>
<svg style="left:116px;top:353px" width="17" height="17" viewBox="0 0 17 17"><path d="M2 8 V4.5 A3.2 3.2 0 0 1 8.4 4.5 V8" stroke="#5E9E54" stroke-width="2.2" fill="none"/><rect x="6" y="8" width="11" height="9" rx="1" fill="#5E9E54"/><rect x="10" y="11" width="3" height="3" fill="#3C3F41"/></svg>
<div class="t" style="left:147.00px;top:347.99px;font-size:26px;color:#BBBBBB;letter-spacing:0.6px;">getOne(id:ID):T</div>
<svg style="left:78px;top:385px" width="28" height="28" viewBox="0 0 28 28"><circle cx="14" cy="14" r="14" fill="#7F898F"/><rect x="5.5" y="-1" width="17" height="30" rx="8.5" fill="#3C3F41"/><rect x="6.5" y="0" width="15" height="28" rx="7.5" fill="#B86D7E"/><path d="M8.5 20.5 V11.5 M7 11.8 H8.5 M8.5 13.5 C9 11 13.8 11 13.8 13.5 V20.5 M13.8 13.5 C14.5 11 19.5 11 19.5 13.5 V20.5" stroke="#3A2830" stroke-width="1.8" fill="none"/></svg>
<svg style="left:116px;top:391px" width="17" height="17" viewBox="0 0 17 17"><path d="M2 8 V4.5 A3.2 3.2 0 0 1 8.4 4.5 V8" stroke="#5E9E54" stroke-width="2.2" fill="none"/><rect x="6" y="8" width="11" height="9" rx="1" fill="#5E9E54"/><rect x="10" y="11" width="3" height="3" fill="#3C3F41"/></svg>
<div class="t" style="left:147.00px;top:385.99px;font-size:26px;color:#BBBBBB;letter-spacing:0.6px;">findAll(example:Example&lt;S&gt;):List&lt;S&gt;</div>
<svg style="left:78px;top:423px" width="28" height="28" viewBox="0 0 28 28"><circle cx="14" cy="14" r="14" fill="#7F898F"/><rect x="5.5" y="-1" width="17" height="30" rx="8.5" fill="#3C3F41"/><rect x="6.5" y="0" width="15" height="28" rx="7.5" fill="#B86D7E"/><path d="M8.5 20.5 V11.5 M7 11.8 H8.5 M8.5 13.5 C9 11 13.8 11 13.8 13.5 V20.5 M13.8 13.5 C14.5 11 19.5 11 19.5 13.5 V20.5" stroke="#3A2830" stroke-width="1.8" fill="none"/></svg>
<svg style="left:116px;top:429px" width="17" height="17" viewBox="0 0 17 17"><path d="M2 8 V4.5 A3.2 3.2 0 0 1 8.4 4.5 V8" stroke="#5E9E54" stroke-width="2.2" fill="none"/><rect x="6" y="8" width="11" height="9" rx="1" fill="#5E9E54"/><rect x="10" y="11" width="3" height="3" fill="#3C3F41"/></svg>
<div class="t" style="left:147.00px;top:423.99px;font-size:26px;color:#BBBBBB;letter-spacing:0.6px;">findAll(example:Example&lt;S&gt;, sort:Sort):List&lt;S&gt;</div>
<svg style="left:6px;top:468px" width="19" height="16" viewBox="0 0 19 16"><path d="M0 0 H19 L9.5 16 Z" fill="#A8A8A8"/></svg>
<svg style="left:43px;top:461px" width="28" height="28" viewBox="0 0 28 28"><circle cx="14" cy="14" r="14" fill="#5F9B4A"/><path d="M10.5 8.2 H17.5 M14 8.2 V19.8 M10.5 19.8 H17.5" stroke="#1F2B1A" stroke-width="2" fill="none"/></svg>
<div class="t" style="left:78.00px;top:461.99px;font-size:26px;color:#BBBBBB;letter-spacing:0.75px;">org.springframework.data.repository.PagingAndSortingRepository</div>
<svg style="left:78px;top:499px" width="28" height="28" viewBox="0 0 28 28"><circle cx="14" cy="14" r="14" fill="#7F898F"/><rect x="5.5" y="-1" width="17" height="30" rx="8.5" fill="#3C3F41"/><rect x="6.5" y="0" width="15" height="28" rx="7.5" fill="#B86D7E"/><path d="M8.5 20.5 V11.5 M7 11.8 H8.5 M8.5 13.5 C9 11 13.8 11 13.8 13.5 V20.5 M13.8 13.5 C14.5 11 19.5 11 19.5 13.5 V20.5" stroke="#3A2830" stroke-width="1.8" fill="none"/></svg>
<svg style="left:116px;top:505px" width="17" height="17" viewBox="0 0 17 17"><path d="M2 8 V4.5 A3.2 3.2 0 0 1 8.4 4.5 V8" stroke="#5E9E54" stroke-width="2.2" fill="none"/><rect x="6" y="8" width="11" height="9" rx="1" fill="#5E9E54"/><rect x="10" y="11" width="3" height="3" fill="#3C3F41"/></svg>
<div class="t" style="left:147.00px;top:499.99px;font-size:26px;color:#BBBBBB;letter-spacing:0.6px;">findAll(pageable:Pageable):Page&lt;T&gt;</div>
<svg style="left:6px;top:544px" width="19" height="16" viewBox="0 0 19 16"><path d="M0 0 H19 L9.5 16 Z" fill="#A8A8A8"/></svg>
<svg style="left:43px;top:537px" width="28" height="28" viewBox="0 0 28 28"><circle cx="14" cy="14" r="14" fill="#5F9B4A"/><path d="M10.5 8.2 H17.5 M14 8.2 V19.8 M10.5 19.8 H17.5" stroke="#1F2B1A" stroke-width="2" fill="none"/></svg>
<div class="t" style="left:78.00px;top:537.99px;font-size:26px;color:#BBBBBB;letter-spacing:0.75px;">org.springframework.data.repository.CrudRepository</div>
<svg style="left:78px;top:575px" width="28" height="28" viewBox="0 0 28 28"><circle cx="14" cy="14" r="14" fill="#7F898F"/><rect x="5.5" y="-1" width="17" height="30" rx="8.5" fill="#3C3F41"/><rect x="6.5" y="0" width="15" height="28" rx="7.5" fill="#B86D7E"/><path d="M8.5 20.5 V11.5 M7 11.8 H8.5 M8.5 13.5 C9 11 13.8 11 13.8 13.5 V20.5 M13.8 13.5 C14.5 11 19.5 11 19.5 13.5 V20.5" stroke="#3A2830" stroke-width="1.8" fill="none"/></svg>
<svg style="left:116px;top:581px" width="17" height="17" viewBox="0 0 17 17"><path d="M2 8 V4.5 A3.2 3.2 0 0 1 8.4 4.5 V8" stroke="#5E9E54" stroke-width="2.2" fill="none"/><rect x="6" y="8" width="11" height="9" rx="1" fill="#5E9E54"/><rect x="10" y="11" width="3" height="3" fill="#3C3F41"/></svg>
<div class="t" style="left:147.00px;top:575.99px;font-size:26px;color:#BBBBBB;letter-spacing:0.6px;">save(entity:S):S</div>
<svg style="left:78px;top:613px" width="28" height="28" viewBox="0 0 28 28"><circle cx="14" cy="14" r="14" fill="#7F898F"/><rect x="5.5" y="-1" width="17" height="30" rx="8.5" fill="#3C3F41"/><rect x="6.5" y="0" width="15" height="28" rx="7.5" fill="#B86D7E"/><path d="M8.5 20.5 V11.5 M7 11.8 H8.5 M8.5 13.5 C9 11 13.8 11 13.8 13.5 V20.5 M13.8 13.5 C14.5 11 19.5 11 19.5 13.5 V20.5" stroke="#3A2830" stroke-width="1.8" fill="none"/></svg>
<svg style="left:116px;top:619px" width="17" height="17" viewBox="0 0 17 17"><path d="M2 8 V4.5 A3.2 3.2 0 0 1 8.4 4.5 V8" stroke="#5E9E54" stroke-width="2.2" fill="none"/><rect x="6" y="8" width="11" height="9" rx="1" fill="#5E9E54"/><rect x="10" y="11" width="3" height="3" fill="#3C3F41"/></svg>
<div class="t" style="left:147.00px;top:613.99px;font-size:26px;color:#BBBBBB;letter-spacing:0.6px;">findById(id:ID):Optional&lt;T&gt;</div>
<svg style="left:78px;top:651px" width="28" height="28" viewBox="0 0 28 28"><circle cx="14" cy="14" r="14" fill="#7F898F"/><rect x="5.5" y="-1" width="17" height="30" rx="8.5" fill="#3C3F41"/><rect x="6.5" y="0" width="15" height="28" rx="7.5" fill="#B86D7E"/><path d="M8.5 20.5 V11.5 M7 11.8 H8.5 M8.5 13.5 C9 11 13.8 11 13.8 13.5 V20.5 M13.8 13.5 C14.5 11 19.5 11 19.5 13.5 V20.5" stroke="#3A2830" stroke-width="1.8" fill="none"/></svg>
<svg style="left:116px;top:657px" width="17" height="17" viewBox="0 0 17 17"><path d="M2 8 V4.5 A3.2 3.2 0 0 1 8.4 4.5 V8" stroke="#5E9E54" stroke-width="2.2" fill="none"/><rect x="6" y="8" width="11" height="9" rx="1" fill="#5E9E54"/><rect x="10" y="11" width="3" height="3" fill="#3C3F41"/></svg>
<div class="t" style="left:147.00px;top:651.99px;font-size:26px;color:#BBBBBB;letter-spacing:0.6px;">existsById(id:ID):boolean</div>
<svg style="left:78px;top:689px" width="28" height="28" viewBox="0 0 28 28"><circle cx="14" cy="14" r="14" fill="#7F898F"/><rect x="5.5" y="-1" width="17" height="30" rx="8.5" fill="#3C3F41"/><rect x="6.5" y="0" width="15" height="28" rx="7.5" fill="#B86D7E"/><path d="M8.5 20.5 V11.5 M7 11.8 H8.5 M8.5 13.5 C9 11 13.8 11 13.8 13.5 V20.5 M13.8 13.5 C14.5 11 19.5 11 19.5 13.5 V20.5" stroke="#3A2830" stroke-width="1.8" fill="none"/></svg>
<svg style="left:116px;top:695px" width="17" height="17" viewBox="0 0 17 17"><path d="M2 8 V4.5 A3.2 3.2 0 0 1 8.4 4.5 V8" stroke="#5E9E54" stroke-width="2.2" fill="none"/><rect x="6" y="8" width="11" height="9" rx="1" fill="#5E9E54"/><rect x="10" y="11" width="3" height="3" fill="#3C3F41"/></svg>
<div class="t" style="left:147.00px;top:689.99px;font-size:26px;color:#BBBBBB;letter-spacing:0.6px;">count():long</div>
<svg style="left:78px;top:727px" width="28" height="28" viewBox="0 0 28 28"><circle cx="14" cy="14" r="14" fill="#7F898F"/><rect x="5.5" y="-1" width="17" height="30" rx="8.5" fill="#3C3F41"/><rect x="6.5" y="0" width="15" height="28" rx="7.5" fill="#B86D7E"/><path d="M8.5 20.5 V11.5 M7 11.8 H8.5 M8.5 13.5 C9 11 13.8 11 13.8 13.5 V20.5 M13.8 13.5 C14.5 11 19.5 11 19.5 13.5 V20.5" stroke="#3A2830" stroke-width="1.8" fill="none"/></svg>
<svg style="left:116px;top:733px" width="17" height="17" viewBox="0 0 17 17"><path d="M2 8 V4.5 A3.2 3.2 0 0 1 8.4 4.5 V8" stroke="#5E9E54" stroke-width="2.2" fill="none"/><rect x="6" y="8" width="11" height="9" rx="1" fill="#5E9E54"/><rect x="10" y="11" width="3" height="3" fill="#3C3F41"/></svg>
<div class="t" style="left:147.00px;top:727.99px;font-size:26px;color:#BBBBBB;letter-spacing:0.6px;">deleteById(id:ID):void</div>
<svg style="left:78px;top:765px" width="28" height="28" viewBox="0 0 28 28"><circle cx="14" cy="14" r="14" fill="#7F898F"/><rect x="5.5" y="-1" width="17" height="30" rx="8.5" fill="#3C3F41"/><rect x="6.5" y="0" width="15" height="28" rx="7.5" fill="#B86D7E"/><path d="M8.5 20.5 V11.5 M7 11.8 H8.5 M8.5 13.5 C9 11 13.8 11 13.8 13.5 V20.5 M13.8 13.5 C14.5 11 19.5 11 19.5 13.5 V20.5" stroke="#3A2830" stroke-width="1.8" fill="none"/></svg>
<svg style="left:116px;top:771px" width="17" height="17" viewBox="0 0 17 17"><path d="M2 8 V4.5 A3.2 3.2 0 0 1 8.4 4.5 V8" stroke="#5E9E54" stroke-width="2.2" fill="none"/><rect x="6" y="8" width="11" height="9" rx="1" fill="#5E9E54"/><rect x="10" y="11" width="3" height="3" fill="#3C3F41"/></svg>
<div class="t" style="left:147.00px;top:765.99px;font-size:26px;color:#BBBBBB;letter-spacing:0.6px;">delete(entity:T):void</div>
<svg style="left:78px;top:803px" width="28" height="28" viewBox="0 0 28 28"><circle cx="14" cy="14" r="14" fill="#7F898F"/><rect x="5.5" y="-1" width="17" height="30" rx="8.5" fill="#3C3F41"/><rect x="6.5" y="0" width="15" height="28" rx="7.5" fill="#B86D7E"/><path d="M8.5 20.5 V11.5 M7 11.8 H8.5 M8.5 13.5 C9 11 13.8 11 13.8 13.5 V20.5 M13.8 13.5 C14.5 11 19.5 11 19.5 13.5 V20.5" stroke="#3A2830" stroke-width="1.8" fill="none"/></svg>
<svg style="left:116px;top:809px" width="17" height="17" viewBox="0 0 17 17"><path d="M2 8 V4.5 A3.2 3.2 0 0 1 8.4 4.5 V8" stroke="#5E9E54" stroke-width="2.2" fill="none"/><rect x="6" y="8" width="11" height="9" rx="1" fill="#5E9E54"/><rect x="10" y="11" width="3" height="3" fill="#3C3F41"/></svg>
<div class="t" style="left:147.00px;top:803.99px;font-size:26px;color:#BBBBBB;letter-spacing:0.6px;">deleteAll(entities:Iterable&lt;? extends T&gt;):void</div>
<svg style="left:78px;top:841px" width="28" height="28" viewBox="0 0 28 28"><circle cx="14" cy="14" r="14" fill="#7F898F"/><rect x="5.5" y="-1" width="17" height="30" rx="8.5" fill="#3C3F41"/><rect x="6.5" y="0" width="15" height="28" rx="7.5" fill="#B86D7E"/><path d="M8.5 20.5 V11.5 M7 11.8 H8.5 M8.5 13.5 C9 11 13.8 11 13.8 13.5 V20.5 M13.8 13.5 C14.5 11 19.5 11 19.5 13.5 V20.5" stroke="#3A2830" stroke-width="1.8" fill="none"/></svg>
<svg style="left:116px;top:847px" width="17" height="17" viewBox="0 0 17 17"><path d="M2 8 V4.5 A3.2 3.2 0 0 1 8.4 4.5 V8" stroke="#5E9E54" stroke-width="2.2" fill="none"/><rect x="6" y="8" width="11" height="9" rx="1" fill="#5E9E54"/><rect x="10" y="11" width="3" height="3" fill="#3C3F41"/></svg>
<div class="t" style="left:147.00px;top:841.99px;font-size:26px;color:#BBBBBB;letter-spacing:0.6px;">deleteAll():void</div>
<svg style="left:6px;top:886px" width="19" height="16" viewBox="0 0 19 16"><path d="M0 0 H19 L9.5 16 Z" fill="#A8A8A8"/></svg>
<svg style="left:43px;top:879px" width="28" height="28" viewBox="0 0 28 28"><circle cx="14" cy="14" r="14" fill="#5F9B4A"/><path d="M10.5 8.2 H17.5 M14 8.2 V19.8 M10.5 19.8 H17.5" stroke="#1F2B1A" stroke-width="2" fill="none"/></svg>
<div class="t" style="left:78.00px;top:879.99px;font-size:26px;color:#BBBBBB;letter-spacing:0.75px;">org.springframework.data.repository.query.QueryByExampleExecutor</div>
<svg style="left:78px;top:917px" width="28" height="28" viewBox="0 0 28 28"><circle cx="14" cy="14" r="14" fill="#7F898F"/><rect x="5.5" y="-1" width="17" height="30" rx="8.5" fill="#3C3F41"/><rect x="6.5" y="0" width="15" height="28" rx="7.5" fill="#B86D7E"/><path d="M8.5 20.5 V11.5 M7 11.8 H8.5 M8.5 13.5 C9 11 13.8 11 13.8 13.5 V20.5 M13.8 13.5 C14.5 11 19.5 11 19.5 13.5 V20.5" stroke="#3A2830" stroke-width="1.8" fill="none"/></svg>
<svg style="left:116px;top:923px" width="17" height="17" viewBox="0 0 17 17"><path d="M2 8 V4.5 A3.2 3.2 0 0 1 8.4 4.5 V8" stroke="#5E9E54" stroke-width="2.2" fill="none"/><rect x="6" y="8" width="11" height="9" rx="1" fill="#5E9E54"/><rect x="10" y="11" width="3" height="3" fill="#3C3F41"/></svg>
<div class="t" style="left:147.00px;top:917.99px;font-size:26px;color:#BBBBBB;letter-spacing:0.6px;">findOne(example:Example&lt;S&gt;):Optional&lt;S&gt;</div>
<svg style="left:78px;top:955px" width="28" height="28" viewBox="0 0 28 28"><circle cx="14" cy="14" r="14" fill="#7F898F"/><rect x="5.5" y="-1" width="17" height="30" rx="8.5" fill="#3C3F41"/><rect x="6.5" y="0" width="15" height="28" rx="7.5" fill="#B86D7E"/><path d="M8.5 20.5 V11.5 M7 11.8 H8.5 M8.5 13.5 C9 11 13.8 11 13.8 13.5 V20.5 M13.8 13.5 C14.5 11 19.5 11 19.5 13.5 V20.5" stroke="#3A2830" stroke-width="1.8" fill="none"/></svg>
<svg style="left:116px;top:961px" width="17" height="17" viewBox="0 0 17 17"><path d="M2 8 V4.5 A3.2 3.2 0 0 1 8.4 4.5 V8" stroke="#5E9E54" stroke-width="2.2" fill="none"/><rect x="6" y="8" width="11" height="9" rx="1" fill="#5E9E54"/><rect x="10" y="11" width="3" height="3" fill="#3C3F41"/></svg>
<div class="t" style="left:147.00px;top:955.99px;font-size:26px;color:#BBBBBB;letter-spacing:0.6px;">findAll(example:Example&lt;S&gt;, pageable:Pageable):Page&lt;S&gt;</div>
<svg style="left:78px;top:993px" width="28" height="28" viewBox="0 0 28 28"><circle cx="14" cy="14" r="14" fill="#7F898F"/><rect x="5.5" y="-1" width="17" height="30" rx="8.5" fill="#3C3F41"/><rect x="6.5" y="0" width="15" height="28" rx="7.5" fill="#B86D7E"/><path d="M8.5 20.5 V11.5 M7 11.8 H8.5 M8.5 13.5 C9 11 13.8 11 13.8 13.5 V20.5 M13.8 13.5 C14.5 11 19.5 11 19.5 13.5 V20.5" stroke="#3A2830" stroke-width="1.8" fill="none"/></svg>
<svg style="left:116px;top:999px" width="17" height="17" viewBox="0 0 17 17"><path d="M2 8 V4.5 A3.2 3.2 0 0 1 8.4 4.5 V8" stroke="#5E9E54" stroke-width="2.2" fill="none"/><rect x="6" y="8" width="11" height="9" rx="1" fill="#5E9E54"/><rect x="10" y="11" width="3" height="3" fill="#3C3F41"/></svg>
<div class="t" style="left:147.00px;top:993.99px;font-size:26px;color:#BBBBBB;letter-spacing:0.6px;">count(example:Example&lt;S&gt;):long</div>
<svg style="left:78px;top:1031px" width="28" height="28" viewBox="0 0 28 28"><circle cx="14" cy="14" r="14" fill="#7F898F"/><rect x="5.5" y="-1" width="17" height="30" rx="8.5" fill="#3C3F41"/><rect x="6.5" y="0" width="15" height="28" rx="7.5" fill="#B86D7E"/><path d="M8.5 20.5 V11.5 M7 11.8 H8.5 M8.5 13.5 C9 11 13.8 11 13.8 13.5 V20.5 M13.8 13.5 C14.5 11 19.5 11 19.5 13.5 V20.5" stroke="#3A2830" stroke-width="1.8" fill="none"/></svg>
<svg style="left:116px;top:1037px" width="17" height="17" viewBox="0 0 17 17"><path d="M2 8 V4.5 A3.2 3.2 0 0 1 8.4 4.5 V8" stroke="#5E9E54" stroke-width="2.2" fill="none"/><rect x="6" y="8" width="11" height="9" rx="1" fill="#5E9E54"/><rect x="10" y="11" width="3" height="3" fill="#3C3F41"/></svg>
<div class="t" style="left:147.00px;top:1031.99px;font-size:26px;color:#BBBBBB;letter-spacing:0.6px;">exists(example:Example&lt;S&gt;):boolean</div>
</div>
<svg style="left:1378px;top:376px" width="252" height="1056" viewBox="0 0 252 1056"><rect x="6" y="6" width="240" height="1044" rx="15" fill="none" stroke="#EF5326" stroke-width="12"/></svg>
<div class="a" style="left:1360px;top:1474px;width:28px;height:28px;border-radius:4px;background:#43484B;border:2px solid #6A6D70"></div>
<svg style="left:1365px;top:1479px" width="18" height="18" viewBox="0 0 18 18"><path d="M2.5 10 L7 15 L15.5 3" stroke="#BBBBBB" stroke-width="3.4" fill="none" stroke-linecap="round" stroke-linejoin="round"/></svg>
<div class="t" style="left:1401.00px;top:1475.99px;font-size:26px;color:#BBBBBB;letter-spacing:0.539px;">Copy JavaDoc</div>
<div class="a" style="left:1360px;top:1520px;width:28px;height:28px;border-radius:4px;background:#43484B;border:2px solid #6A6D70"></div>
<svg style="left:1365px;top:1525px" width="18" height="18" viewBox="0 0 18 18"><path d="M2.5 10 L7 15 L15.5 3" stroke="#BBBBBB" stroke-width="3.4" fill="none" stroke-linecap="round" stroke-linejoin="round"/></svg>
<div class="t" style="left:1401.00px;top:1521.99px;font-size:26px;color:#BBBBBB;letter-spacing:0.444px;">Insert @Override</div>
<div class="a" style="left:1726px;top:1509px;width:144px;height:47px;border-radius:6px;background:#4C5052;border:2px solid #5E6163"></div>
<div class="t" style="left:1759.00px;top:1520.49px;font-size:26px;color:#BBBBBB;letter-spacing:-0.187px;">Cancel</div>
<div class="a" style="left:1894px;top:1509px;width:144px;height:47px;border-radius:6px;background:#365880;border:2px solid #4C7AAB"></div>
<div class="t" style="left:1948.00px;top:1520.49px;font-size:26px;color:#D0D8E0;letter-spacing:-1.565px;">OK</div>
<div class="a" style="left:27px;top:1801px;width:2447px;height:2px;background:#3A3C3E"></div>
<div class="a" style="left:27px;top:1803px;width:2447px;height:42px;background:#333537"></div>
<div class="t" style="left:166.00px;top:1814.68px;font-size:24px;color:#BBBBBB;letter-spacing:0.739px;">UserRepository</div>
<div class="a" style="left:0;top:1845px;width:2474px;height:2px;background:#4A4C4E"></div>
<div class="a" style="left:0;top:1847px;width:2474px;height:41px;background:#3C3F41"></div>
<div class="a" style="left:0;top:1888px;width:2474px;height:2px;background:#46484A"></div>
<div class="a" style="left:0;top:1890px;width:2474px;height:40px;background:#3C3F41"></div>
<svg style="left:2093px;top:1857px" width="28" height="26" viewBox="0 0 28 26"><path d="M13 1.5 A11.5 11 0 1 0 13 23.5 H25 V13 A11.5 11.5 0 0 0 13 1.5 Z" fill="none" stroke="#BBBBBB" stroke-width="2.2"/></svg>
<div class="t" style="left:2128.00px;top:1855.68px;font-size:24px;color:#BBBBBB;letter-spacing:-0.885px;">Event Log</div>
<svg style="left:2274px;top:1855px" width="28" height="28" viewBox="0 0 34 34"><path d="M6 22 C10 10 20 2 32 1 C31 12 24 22 12 28 Z" fill="#7CB342"/><path d="M2 20 L9 14 L12 18 Z M12 28 L18 24 L14 32 Z" fill="#7CB342"/><circle cx="21" cy="11" r="3" fill="#E8E8E8"/><text x="19" y="33" font-family="Liberation Sans" font-weight="bold" font-size="11" fill="#FFFFFF">JR</text></svg>
<div class="t" style="left:2308.00px;top:1855.68px;font-size:24px;color:#BBBBBB;letter-spacing:-0.879px;">JRebel Console</div>
<div class="t" style="left:2148.00px;top:1898.68px;font-size:24px;color:#BBBBBB;letter-spacing:-1.237px;">10:5</div>
<div class="t" style="left:2215.00px;top:1899.53px;font-size:23px;color:#BBBBBB;">LF</div>
<div class="t" style="left:2281.00px;top:1898.68px;font-size:24px;color:#BBBBBB;letter-spacing:-1.248px;">UTF-8</div>
<svg style="left:2247px;top:1900px" width="11" height="20" viewBox="0 0 11 20"><path d="M0 7 L5.5 0 L11 7 Z M0 13 L5.5 20 L11 13 Z" fill="#A0A0A0"/></svg>
<svg style="left:2356px;top:1900px" width="11" height="20" viewBox="0 0 11 20"><path d="M0 7 L5.5 0 L11 7 Z M0 13 L5.5 20 L11 13 Z" fill="#A0A0A0"/></svg>
<svg style="left:2390px;top:1896px" width="24" height="26" viewBox="0 0 24 26"><path d="M3 12 V7 A5 5 0 0 1 13 7" stroke="#BBBBBB" stroke-width="2.4" fill="none"/><rect x="8" y="12" width="14" height="13" fill="#BBBBBB"/></svg>
<svg style="left:2438px;top:1893px" width="30" height="34" viewBox="0 0 30 34"><path d="M6 12 V6 A9 6 0 0 1 24 6 V12 Z" fill="none" stroke="#909090" stroke-width="2"/><rect x="2" y="12" width="26" height="4" fill="#909090"/><path d="M6 18 C6 26 10 30 15 30 C20 30 24 26 24 18" stroke="#909090" stroke-width="2" fill="none"/><circle cx="10" cy="21" r="2" fill="#909090"/><circle cx="20" cy="21" r="2" fill="#909090"/><path d="M9 27 H21" stroke="#909090" stroke-width="2"/></svg>
<div class="a" style="left:0;top:1928px;width:77px;height:2px;background:#56595B"></div>
</body></html>
